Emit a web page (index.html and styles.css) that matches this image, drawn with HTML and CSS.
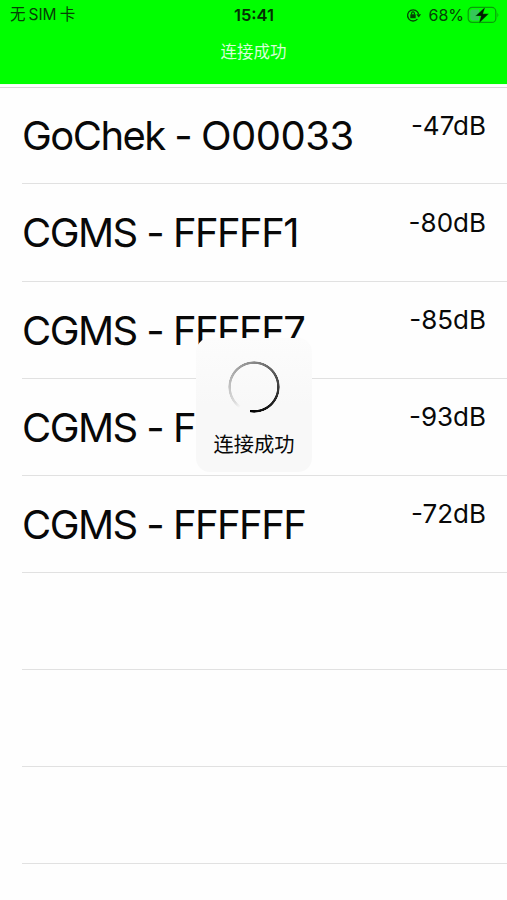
FILE: index.html
```html
<!DOCTYPE html>
<html lang="zh-CN">
<head>
<meta charset="utf-8">
<title>连接成功</title>
<link rel="stylesheet" href="styles.css">
</head>
<body>
<header class="header">
  <div class="status">
    <span class="carrier">无<span class="sim">SIM</span>卡</span>
    <span class="time">15:41</span>
    <span class="indicators">
      <svg class="lock" width="16" height="14" viewBox="0 0 16 14" fill="none" stroke="#064006">
        <path d="M11.4 11.1A5.6 5.6 0 1 1 12.6 6" stroke-width="1.3"/>
        <path d="M10.3 6.2h4.8l-2.4 3.2z" fill="#064006" stroke="none"/>
        <rect x="4.3" y="6.2" width="5.4" height="4" rx=".5" fill="#064006" stroke="none"/>
        <path d="M5.6 6.6V5.3a1.4 1.4 0 0 1 2.8 0v1.3" stroke-width="1.1"/>
      </svg>
      <span class="percent">68%</span>
      <svg class="battery" width="33" height="18" viewBox="0 0 33 18">
        <rect x="1.2" y="1.4" width="27.6" height="15" rx="4" fill="none" stroke="#0a9c0a" stroke-width="1.2"/>
        <path d="M5.5 3.4H12v11H5.5a2.3 2.3 0 0 1-2.3-2.3V5.7a2.3 2.3 0 0 1 2.3-2.3z" fill="#35c759"/>
        <path d="M30.5 6.5q1.8 2.5 0 5z" fill="#0a9c0a"/>
        <path d="M18.2.9 8.5 10h5.5l-2 7.3L21.8 7.8H16z" fill="#031c03" stroke="#0be00b" stroke-width=".3"/>
      </svg>
    </span>
  </div>
  <h1 class="title">连接成功</h1>
</header>
<main class="list">
  <div class="row"><span class="name">GoChek - <span class="serial">O00033</span></span><span class="signal">-47dB</span></div>
  <div class="row"><span class="name">CGMS - FFFFF1</span><span class="signal">-80dB</span></div>
  <div class="row"><span class="name">CGMS - FFFFF7</span><span class="signal">-85dB</span></div>
  <div class="row"><span class="name">CGMS - F</span><span class="signal">-93dB</span></div>
  <div class="row"><span class="name">CGMS - FFFFFF</span><span class="signal">-72dB</span></div>
  <div class="row"></div>
  <div class="row"></div>
  <div class="row"></div>
</main>
<div class="toast">
  <div class="spinner"></div>
  <span class="message">连接成功</span>
</div>
</body>
</html>
```
FILE: styles.css
```css
* { box-sizing: border-box; }
body {
  margin: 0;
  height: 900px;
  overflow: hidden;
  background: #fefefe;
  color: #080808;
  font-family: Inter, "Noto Sans CJK SC", sans-serif;
}
.header {
  height: 88px;
  background: linear-gradient(#0f0 84px, #e8ffe8 84px, #fff 85px, #fff 86.5px, #d6d6d6 87px, #d6d6d6 88px);
}
.status {
  display: grid;
  grid-template-columns: 1fr auto 1fr;
  align-items: center;
  height: 28px;
  padding: 0 7px 0 10px;
  color: #064006;
  font-size: 16px;
  line-height: 28px;
}
.carrier { font-size: 15.5px; padding-top: 1px; }
.sim { margin: 0 3px; }
.time {
  margin-left: -2px;
  font-size: 16.5px;
  font-weight: 600;
  color: #033003;
}
.indicators {
  display: flex;
  justify-content: flex-end;
  align-items: center;
}
.lock { margin-right: 6px; }
.percent { margin-right: 3px; }
.title {
  margin: 12px 0 0;
  color: #d8ffd8;
  text-align: center;
  font-size: 16.5px;
  font-weight: 400;
  line-height: 24px;
}
.row {
  display: flex;
  justify-content: space-between;
  height: 97.1px;
  margin-left: 22px;
  padding-right: 21px;
  border-bottom: 1.5px solid #e1e1e1;
}
.list { margin-top: -.65px; }
.name {
  padding-top: 25px;
  font-size: 40px;
  letter-spacing: -1.55px;
  line-height: 48px;
  white-space: nowrap;
}
.serial { letter-spacing: -.5px; }
.signal {
  padding-top: 22.2px;
  font-size: 26px;
  line-height: 32px;
}
.toast {
  position: absolute;
  left: 196px;
  top: 338px;
  width: 116px;
  height: 134px;
  display: flex;
  flex-direction: column;
  align-items: center;
  padding-top: 23px;
  border-radius: 14px;
  background: linear-gradient(#fcfcfc, #f8f8f8 50%);
}
.spinner {
  width: 52px;
  height: 52px;
  border-radius: 50%;
  background: conic-gradient(from 190deg, transparent 0 25deg, #ddd 40deg, #888 170deg, #333 270deg, #000 359deg, transparent 360deg);
  mask: radial-gradient(circle, transparent 22.8px, #000 23.5px 25.3px, transparent 26px);
}
.message {
  margin-top: 18px;
  font-size: 20.3px;
  line-height: 28px;
}
```
